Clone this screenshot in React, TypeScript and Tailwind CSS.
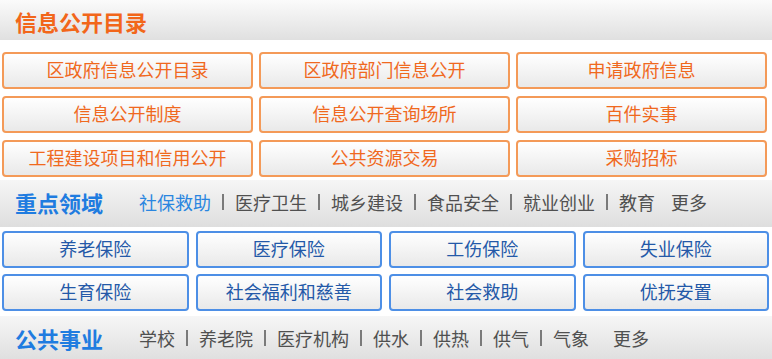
const font = { fontFamily: '"Noto Sans CJK SC", "Noto Sans", sans-serif' };

const catalog = [
  "区政府信息公开目录",
  "区政府部门信息公开",
  "申请政府信息",
  "信息公开制度",
  "信息公开查询场所",
  "百件实事",
  "工程建设项目和信用公开",
  "公共资源交易",
  "采购招标",
];

const insurance = [
  "养老保险",
  "医疗保险",
  "工伤保险",
  "失业保险",
  "生育保险",
  "社会福利和慈善",
  "社会救助",
  "优抚安置",
];

function Sep() {
  return <span className="mx-[11px] inline-block h-[16px] w-[2px] bg-[#7a7a7a]" />;
}

function Links({ items, active, moreGap }: { items: string[]; active?: string; moreGap: string }) {
  return (
    <div className="flex items-center text-[18px] leading-none">
      {items.map((t, i) => (
        <span key={t} className="flex items-center">
          {i > 0 && <Sep />}
          <span className={t === active ? "text-[#2a86e0]" : "text-[#505050]"}>{t}</span>
        </span>
      ))}
      <span className={`${moreGap} text-[#505050]`}>更多</span>
    </div>
  );
}

export default function App() {
  return (
    <div className="w-[772px] h-[359px] overflow-hidden bg-white" style={font}>
      <div className="flex h-[40px] items-center bg-gradient-to-b from-[#fbfbfb] to-[#e0e0e0] pl-[15px] pt-[2px]">
        <span className="text-[22px] font-bold leading-none text-[#f2661a]">信息公开目录</span>
      </div>

      <div className="mt-[12px] grid grid-cols-3 gap-x-[6px] gap-y-[7px] pl-[2px] pr-[5px]">
        {catalog.map((t) => (
          <div
            key={t}
            className="flex h-[37px] items-center justify-center rounded-[4px] border-2 border-[#f49a58] bg-gradient-to-b from-white to-[#e9e9e9] pb-[3px] text-[18px] leading-none text-[#f0691e]"
          >
            {t}
          </div>
        ))}
      </div>

      <div className="mt-[3px] flex h-[47px] items-center bg-gradient-to-b from-[#f6f6f6] to-[#dedede] pl-[15px] pb-[4px]">
        <span className="w-[124px] text-[22px] font-bold leading-none text-[#1f7ce0]">重点领域</span>
        <Links
          items={["社保救助", "医疗卫生", "城乡建设", "食品安全", "就业创业", "教育"]}
          active="社保救助"
          moreGap="ml-[16px]"
        />
      </div>

      <div className="mt-[4px] grid grid-cols-4 gap-x-[7px] gap-y-[6px] pl-[2px] pr-[3px]">
        {insurance.map((t) => (
          <div
            key={t}
            className="flex h-[37px] items-center justify-center rounded-[4px] border-2 border-[#4d8fe6] bg-gradient-to-b from-white to-[#e9e9e9] pb-[3px] text-[18px] leading-none text-[#2459a8]"
          >
            {t}
          </div>
        ))}
      </div>

      <div className="mt-[5px] flex h-[46px] items-center bg-gradient-to-b from-[#f6f6f6] to-[#dedede] pl-[15px] pb-[3px]">
        <span className="w-[124px] text-[22px] font-bold leading-none text-[#1f7ce0]">公共事业</span>
        <Links
          items={["学校", "养老院", "医疗机构", "供水", "供热", "供气", "气象"]}
          moreGap="ml-[24px]"
        />
      </div>
    </div>
  );
}
